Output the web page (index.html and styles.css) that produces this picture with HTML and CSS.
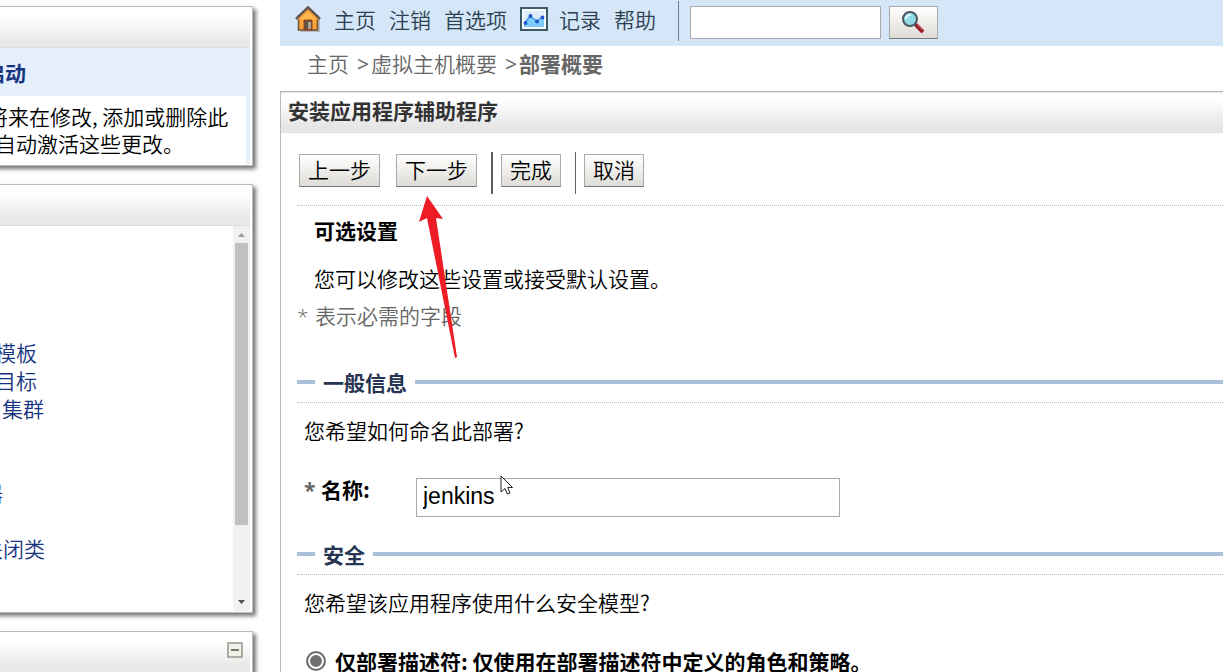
FILE: index.html
```html
<!DOCTYPE html>
<html lang="zh-CN">
<head>
<meta charset="utf-8">
<title>安装应用程序辅助程序</title>
<link rel="stylesheet" href="styles.css">
</head>
<body>
<div class="page">
  <aside class="sidebar">
    <section class="panel">
      <div class="panel-head"></div>
      <h2 class="change-title">启动</h2>
      <div class="change-text">
        <p class="line">将来在修改, 添加或删除此</p>
        <p class="line indented">自动激活这些更改。</p>
      </div>
    </section>
    <section class="panel">
      <div class="panel-head"></div>
      <div class="tree">
        <ul class="tree-list">
          <li class="level-2"><a href="#">模板</a></li>
          <li class="level-2"><a href="#">目标</a></li>
          <li class="level-3"><a href="#">集群</a></li>
          <li class="level-1 spaced"><a href="#">器</a></li>
          <li class="level-1 spaced-small"><a href="#">关闭类</a></li>
        </ul>
        <div class="scrollbar">
          <svg class="scroll-arrow" width="17" height="17" viewBox="0 0 17 17"><path d="M5 11 8.500 7 12 11Z" fill="#9b9b9b"/></svg>
          <div class="scroll-track"><div class="scroll-thumb"></div></div>
          <svg class="scroll-arrow" width="17" height="17" viewBox="0 0 17 17"><path d="M5 6 12 6 8.500 10Z" fill="#505050"/></svg>
        </div>
      </div>
    </section>
    <section class="panel">
      <div class="panel-head">
        <button class="collapse" type="button" aria-label="折叠"><svg width="16" height="16" viewBox="0 0 16 16"><rect x="1" y="1" width="14" height="14" fill="#f1f1ea" stroke="#94958a" stroke-width="1.500"/><path d="M4 8H12" stroke="#77786f" stroke-width="2"/></svg></button>
      </div>
    </section>
  </aside>

  <main class="main">
    <nav class="toolbar">
      <svg class="home-icon" width="28" height="28" viewBox="0 0 28 28">
        <path d="M6 28H26V16L23 12Z" fill="#8d8379" opacity=".45"/>
        <path d="M4.500 12 14 4 23.500 12V26H4.500Z" fill="#f9a23a" stroke="#6d5238" stroke-width="1.500"/>
        <path d="M7 13 14 7 21 13V16H7Z" fill="#ffb850"/>
        <path d="M10 26V16H18V26Z" fill="#5f5142" stroke="#9d431b"/>
        <path d="M14 18H17V25H14Z" fill="#a9a391"/>
        <path d="M2 15 14 3.500 26 15" fill="none" stroke="#5b5550" stroke-width="2.500"/>
        <path d="M4 15.500 14 6 24 15.500" fill="none" stroke="#f0943a" stroke-width="1.500"/>
      </svg>
      <a href="#">主页</a>
      <a href="#">注销</a>
      <a href="#">首选项</a>
      <svg class="chart-icon" width="28" height="24" viewBox="0 0 28 24">
        <rect x="1" y="1" width="26" height="22" fill="#f6fbff" stroke="#3c5a68" stroke-width="2"/>
        <rect x="4" y="4" width="20" height="16" fill="#dcecf8"/>
        <path d="M4 16 10 9 17 14 22 10 24 11V20H4Z" fill="#7ccbfb"/>
        <path d="M5 16 10 9 17 14 22 10" fill="none" stroke="#4a9cec" stroke-width="1.500"/>
        <g fill="#1c55cc"><circle cx="5.500" cy="16" r="1.900"/><circle cx="10.500" cy="9" r="1.900"/><circle cx="17" cy="14.500" r="1.900"/><circle cx="22.500" cy="10.500" r="1.900"/></g>
      </svg>
      <a href="#">记录</a>
      <a href="#">帮助</a>
      <span class="toolbar-rule"></span>
      <input class="search" type="text" aria-label="搜索">
      <button class="btn search-btn" type="button" aria-label="搜索">
        <svg width="24" height="24" viewBox="0 0 24 24">
          <path d="M13 13 16 16" stroke="#3c3f42" stroke-width="3"/>
          <path d="M15 15 22 22" stroke="#9c1f2a" stroke-width="4"/>
          <path d="M16 14.500 21.500 20" stroke="#d0605c" stroke-width="1"/>
          <circle cx="9" cy="9" r="7" fill="#90dbe7" stroke="#4b555c" stroke-width="2"/>
          <path d="M5 9A4 4 0 0 1 10 5" fill="none" stroke="#e2fbff" stroke-width="2"/>
        </svg>
      </button>
    </nav>

    <div class="crumbs"><a href="#">主页</a><span class="sep">&gt;</span><a href="#">虚拟主机概要</a><span class="sep">&gt;</span><b>部署概要</b></div>

    <section class="assistant">
      <h1 class="assistant-head">安装应用程序辅助程序</h1>
      <form class="assistant-body">
        <div class="actions">
          <button class="btn" type="button">上一步</button>
          <button class="btn next" type="button">下一步</button>
          <span class="rule"></span>
          <button class="btn" type="button">完成</button>
          <span class="rule thin"></span>
          <button class="btn" type="button">取消</button>
        </div>
        <h2 class="title">可选设置</h2>
        <p class="intro">您可以修改这些设置或接受默认设置。</p>
        <p class="required"><span class="star">*</span>表示必需的字段</p>

        <h3 class="section-head">一般信息</h3>
        <p class="question">您希望如何命名此部署?</p>
        <div class="field">
          <label class="field-label" for="name"><span class="star">*</span>名称:</label>
          <input class="name-input" id="name" type="text" value="jenkins">
        </div>

        <h3 class="section-head">安全</h3>
        <p class="question">您希望该应用程序使用什么安全模型?</p>
        <div class="choice">
          <input class="radio" type="radio" id="dd" name="model" checked>
          <label for="dd">仅部署描述符: 仅使用在部署描述符中定义的角色和策略。</label>
        </div>
      </form>
    </section>
  </main>
</div>
<svg class="arrow" width="46" height="164" viewBox="0 0 46 164"><path d="M11 0 27 23 20 22 41 161 39 162 11 22 3 26Z" fill="#ee1c25"/></svg>
<svg class="pointer" width="14" height="21" viewBox="0 0 14 21"><path d="M1 1V17L5 13.500 7.500 19 10 18 7.700 12.500H12.500Z" fill="#fff" stroke="#222"/></svg>
</body>
</html>
```
FILE: styles.css
```css
* { box-sizing: border-box; }
body {
  margin: 0;
  height: 100vh;
  overflow: hidden;
  position: relative;
  background: #fff;
  color: #000;
  font: 21px/26px "Noto Sans CJK SC", sans-serif;
  font-weight: 350;
}
h1, h2, h3, p, ul { margin: 0; padding: 0; font-size: 21px; }
ul { list-style: none; }
a { color: inherit; text-decoration: none; }
button, input { font: inherit; color: inherit; margin: 0; }
svg { display: block; }

.page { display: flex; gap: 27px; }

/* The side column is scrolled partly out of view. */
.sidebar {
  flex: none;
  width: 277px;
  margin-left: -24px;
  padding-top: 6px;
  display: flex;
  flex-direction: column;
  gap: 18px;
}
.panel {
  border: 1px solid #bbb;
  padding: 1px 2px 1px 0;
  background: #fff;
  box-shadow: 3px 3px 4px #777;
}
.panel-head {
  height: 40px;
  padding: 9px 7px 0 0;
  display: flex;
  justify-content: flex-end;
  border-bottom: 1px solid #dedede;
  background: linear-gradient(#fff 20%, #e7e9e7 85%);
}
.collapse { border: 0; padding: 0; background: none; width: 16px; height: 16px; }
.change-title {
  padding: 11px 0 11px 7px;
  background: #e6effc;
  color: #17357f;
  font-weight: 700;
}
.change-text {
  padding: 7px 0 7px 10px;
  border-right: 4px solid #e6effc;
  line-height: 27px;
  white-space: nowrap;
}
.indented { padding-left: 8px; }
.tree { display: flex; justify-content: space-between; height: 385px; }
.tree-list { padding-top: 112px; line-height: 28px; color: #17357f; }
.level-1 { padding-left: 5px; }
.level-2 { padding-left: 18px; }
.level-3 { padding-left: 25px; }
.spaced { margin-top: 56px; }
.spaced-small { margin-top: 28px; }
.scrollbar { width: 17px; display: flex; flex-direction: column; background: #f1f1f1; }
.scroll-track { flex: 1; padding: 0 2px; }
.scroll-thumb { height: 282px; background: #c1c1c1; }

.main { flex: 1; min-width: 0; }
.toolbar {
  height: 46px;
  padding: 0 14px;
  display: flex;
  align-items: center;
  background: #d4e6f7;
  color: #2b3f50;
}
.toolbar a { margin-right: 13px; padding-bottom: 8px; white-space: nowrap; }
.home-icon { margin: 0 12px 10px 0; }
.chart-icon { margin: 0 11px 8px 0; }
.toolbar-rule { width: 1px; height: 40px; margin: 0 11px 4px 9px; background: #6f7f91; }
.search { width: 191px; height: 33px; margin-bottom: 2px; border: 1px solid #aaa; background: #fff; padding: 0 6px; }
.btn {
  height: 33px;
  padding: 0 8px 3px;
  border: 1px solid #aaa;
  border-bottom-color: #777;
  background: linear-gradient(#fff, #dddcd6);
  white-space: nowrap;
}
.search-btn { width: 49px; margin: 0 0 2px 8px; padding: 0 11px; }

.crumbs { padding: 4px 27px 15px; color: #666; }
.crumbs b { font-weight: 700; }
.sep { display: inline-block; width: 22px; padding-left: 8px; font-family: "Open Sans", sans-serif; font-weight: 400; line-height: 20px; }

.assistant { border-top: 1px solid #b4b4b4; border-left: 1px solid #b7bbbf; }
.assistant-head {
  padding: 5px 7px 9px;
  font-weight: 700;
  color: #333;
  border-bottom: 1px solid #e0e0dc;
  background: linear-gradient(#e8e8e8, #fff 6%, #fff 20%, #e6e6e6 85%);
}
.assistant-body { padding: 19px 0 20px 16px; }
.actions {
  display: flex;
  align-items: flex-start;
  padding: 0 0 11px 2px;
  border-bottom: 1px dotted #bbb;
}
.actions .btn { margin-top: 2px; }
.next { margin-left: 16px; }
.rule { width: 2px; height: 42px; margin: 0 8px 0 14px; background: #606066; }
.thin { width: 1px; }
.title { margin: 11px 0 22px 17px; font-weight: 700; }
.intro { margin: 0 0 11px 17px; }
.required { color: #666; margin-bottom: 41px; }
.star { display: inline-block; width: 18px; color: #666; font-family: "Open Sans", sans-serif; line-height: 20px; }
.section-head {
  display: flex;
  align-items: center;
  gap: 8px;
  padding-bottom: 7px;
  border-bottom: 1px dotted #bbb;
  color: #263552;
  font-weight: 700;
}
.section-head::before, .section-head::after {
  content: "";
  height: 4px;
  width: 18px;
  background: #a9c0da;
}
.section-head::after { flex: 1; }
.question { margin: 14px 0 0 7px; }
.field { display: flex; align-items: flex-start; margin: 33px 0 24px 7px; }
.field-label { width: 112px; font-weight: 700; }
.field-label .star { width: 17px; }
.name-input {
  width: 424px;
  height: 39px;
  margin-top: 2px;
  padding: 0 6px 2px;
  border: 1px solid #aaa;
  font: 23px "Liberation Sans", Arial, sans-serif;
}
.choice { display: flex; align-items: center; margin: 33px 0 0 9px; font-weight: 700; white-space: nowrap; }
.radio {
  appearance: none;
  width: 20px;
  height: 20px;
  margin: 0 9px 0 0;
  border: 2px solid #707070;
  border-radius: 50%;
  background: #707070;
  box-shadow: inset 0 0 0 2px #fff;
}

/* Annotations lying over the page */
.arrow { position: absolute; left: 416px; top: 196px; }
.pointer { position: absolute; left: 500px; top: 475px; }
```
